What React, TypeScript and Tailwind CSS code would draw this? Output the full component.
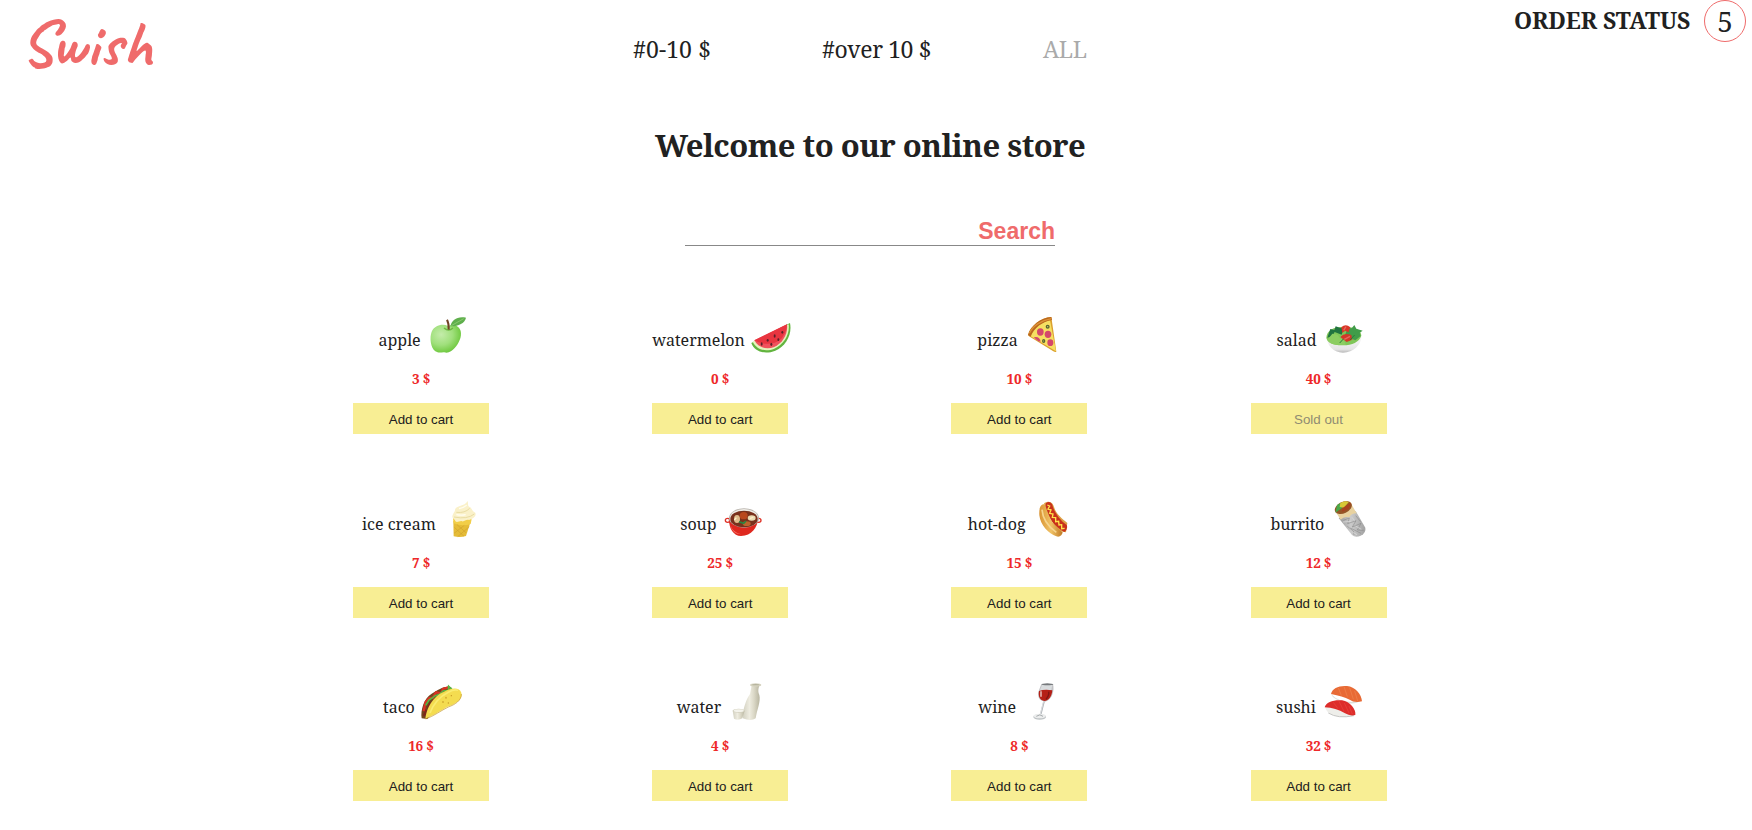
import type { ReactNode } from "react";

type Product = { name: string; price: number; viewBox: string; art: ReactNode; soldOut?: boolean; nameClass: string };

const products: Product[] = [
  {
    name: "apple", price: 3, viewBox: "253 45 132 120", nameClass: "w-[41px]",
    art: (
      <>
        <defs>
          <radialGradient id="apple" cx="0.35" cy="0.35" r="0.75">
            <stop offset="0" stopColor="#c4ecaa" /><stop offset="0.5" stopColor="#a0e07c" /><stop offset="0.85" stopColor="#74cb45" /><stop offset="1" stopColor="#65b83f" />
          </radialGradient>
        </defs>
        <path d="M322 78C305 70 282 76 273 95C266 113 270 143 284 154C295 161 303 156 311 157C322 161 334 154 342 144C355 130 364 110 360 93C354 74 335 72 322 78Z" fill="url(#apple)" />
        <path d="M329 79C334 60 349 48 376 53C372 70 352 80 329 79Z" fill="#5faf4c" />
        <path d="M332 77L369 56" stroke="#9bd57c" strokeWidth="2" />
        <path d="M310 84Q324 96 337 84" stroke="#6eb842" strokeWidth="4" fill="none" />
        <path d="M324 89Q325 70 319 59" stroke="#704224" strokeWidth="6" fill="none" />
      </>
    ),
  },
  {
    name: "watermelon", price: 0, viewBox: "1227 45 132 120", nameClass: "w-[92px]",
    art: (
      <>
        <path d="M1234 129C1243 155 1274 165 1306 152C1339 138 1357 102 1350 69Z" fill="#62b43f" />
        <path d="M1238 125C1250 148 1274 157 1303 146C1331 134 1350 103 1346 73Z" fill="#e5f3bd" />
        <path d="M1243 121C1254 142 1278 151 1303 141C1328 130 1345 101 1341 73Z" fill="#f0525d" />
        <path d="M1243 121L1341 73C1341 84 1337 100 1324 116C1300 139 1262 132 1243 121Z" fill="#e83540" />
        <g fill="#5c2029"><ellipse cx="1265" cy="132" rx="3" ry="5" /><ellipse cx="1283" cy="121" rx="3" ry="4" /><ellipse cx="1294" cy="133" rx="3" ry="5" /><ellipse cx="1304" cy="108" rx="3" ry="5" /><ellipse cx="1315" cy="119" rx="3" ry="4" /><ellipse cx="1327" cy="97" rx="3" ry="4" /></g>
      </>
    ),
  },
  {
    name: "pizza", price: 10, viewBox: "246 45 132 120", nameClass: "w-[40px]",
    art: (
      <>
        <path d="M264 105C272 77 302 53 334 51L349 155Q346 158 340 154L267 109Z" fill="#dba12e" />
        <path d="M271 108C280 84 303 66 330 61L348 154Z" fill="#f6df62" />
        <path d="M264 105C272 77 302 53 334 51L336 60C307 65 282 83 272 110Z" fill="#ba671e" />
        <path d="M268 100C278 78 303 61 334 56" stroke="#dc9238" strokeWidth="4" fill="none" />
        <g fill="#d4476b"><ellipse cx="301" cy="96" rx="10" ry="11" /><ellipse cx="324" cy="103" rx="10" ry="11" /><path d="M281 112Q299 107 302 125L295 124Z" /><ellipse cx="331" cy="128" rx="9" ry="10" /></g>
        <g fill="#c7db66" stroke="#5b6332" strokeWidth="4"><ellipse cx="323" cy="80" rx="4" ry="4" /><ellipse cx="311" cy="123" rx="3" ry="4" /></g>
      </>
    ),
  },
  {
    name: "salad", price: 40, soldOut: true, viewBox: "1144 45 132 120", nameClass: "w-[40px]",
    art: (
      <>
        <defs><linearGradient id="bowl" x2="0" y2="1"><stop stopColor="#fafafa" /><stop offset="0.8" stopColor="#e4e4e4" /><stop offset="1" stopColor="#b9b9b9" /></linearGradient></defs>
        <path d="M1157 111C1160 135 1176 158 1207 158C1238 158 1261 136 1263 108Z" fill="url(#bowl)" />
        <path d="M1157 114C1158 91 1178 80 1210 80C1244 80 1262 91 1262 107C1255 127 1233 137 1203 136C1178 136 1160 127 1157 114Z" fill="#7fc658" />
        <path d="M1160 113L1169 87L1181 90L1185 79L1199 84L1210 83L1203 104L1182 96L1174 109Z" fill="#227440" />
        <path d="M1213 106L1221 84L1233 85L1241 75L1247 86L1266 92L1257 98L1260 108L1244 121L1228 114Z" fill="#419c49" />
        <path d="M1160 120L1175 101L1191 104L1198 115L1209 120L1216 134C1185 138 1165 131 1160 120Z" fill="#8ccd61" />
        <path d="M1202 82Q1215 70 1229 82L1223 97L1214 92L1205 98Z" fill="#d83728" />
        <path d="M1199 111Q1210 97 1232 105L1235 119L1218 126Z" fill="#d23729" />
        <path d="M1209 91L1216 80M1211 118L1228 109" stroke="#e7685e" strokeWidth="4" />
        <path d="M1197 129L1208 117M1228 120L1242 105" stroke="#287e3b" strokeWidth="3" />
      </>
    ),
  },
  {
    name: "ice cream", price: 7, viewBox: "302 54 132 120", nameClass: "w-[74px]",
    art: (
      <>
        <path d="M339 119L391 119L387 134L377 165Q360 170 340 166Z" fill="#e5bc38" />
        <path d="M338 112L393 108Q395 118 391 129Q367 138 340 127Z" fill="#f2ce48" />
        <path d="M342 139L371 166M350 131L377 155M387 137L352 167M372 133L341 157" stroke="#c99a2a" strokeWidth="1.5" />
        <path d="M336 109C336 97 344 94 344 86C347 73 373 77 382 60C385 70 380 75 390 79C397 86 396 92 405 95C409 107 398 113 386 117C376 114 371 125 363 120C354 122 346 126 344 118Z" fill="#faf1c9" />
        <path d="M348 94Q374 97 388 82M341 108Q381 116 402 99" stroke="#e9dca2" strokeWidth="3" fill="none" />
        <path d="M356 83Q369 81 379 73M348 101Q363 104 376 101" stroke="#fffdf0" strokeWidth="4" fill="none" />
      </>
    ),
  },
  {
    name: "soup", price: 25, viewBox: "1143 54 132 120", nameClass: "w-[36px]",
    art: (
      <>
        <ellipse cx="1163" cy="118" rx="7" ry="6" fill="none" stroke="#df3227" strokeWidth="4" />
        <ellipse cx="1256" cy="118" rx="7" ry="6" fill="none" stroke="#df3227" strokeWidth="4" />
        <path d="M1166 111C1167 143 1180 165 1203 165C1235 164 1252 141 1255 111Z" fill="#df281f" />
        <path d="M1171 132Q1180 156 1204 160Q1177 160 1171 132Z" fill="#fa7267" />
        <ellipse cx="1212" cy="111" rx="45" ry="29" fill="#b9b4ad" />
        <ellipse cx="1212" cy="110" rx="42" ry="26" fill="#eeece6" />
        <ellipse cx="1212" cy="114" rx="41" ry="25" fill="#79311d" />
        <ellipse cx="1191" cy="114" rx="9" ry="12" fill="#dfbd8d" /><ellipse cx="1235" cy="111" rx="12" ry="8" fill="#eadbb3" />
        <ellipse cx="1211" cy="104" rx="12" ry="11" fill="#b9481e" /><ellipse cx="1220" cy="128" rx="12" ry="7" fill="#bd642e" />
        <path d="M1183 117L1189 110M1230 113L1240 108" stroke="#fff0ca" strokeWidth="4" /><path d="M1197 122L1211 127L1218 120" stroke="#298541" strokeWidth="5" fill="none" />
      </>
    ),
  },
  {
    name: "hot-dog", price: 15, viewBox: "276 54 132 120", nameClass: "w-[59px]",
    art: (
      <>
        <defs><linearGradient id="bun"><stop stopColor="#d99332" /><stop offset="0.5" stopColor="#f0c266" /><stop offset="1" stopColor="#c07a24" /></linearGradient></defs>
        <path d="M312 67C329 57 338 64 343 80C348 98 366 113 382 126L378 154L349 149Z" fill="#dda044" />
        <path d="M318 66Q331 58 337 71C340 90 359 117 380 132Q385 143 373 153C343 136 323 110 315 79Z" fill="#c9311b" />
        <path d="M315 70C299 67 297 87 298 103C301 132 326 158 349 166C359 170 367 162 368 154C340 137 327 109 315 70Z" fill="url(#bun)" />
        <path d="M306 86Q309 126 349 154" stroke="#f6d58e" strokeWidth="5" fill="none" />
        <path d="M322 72L329 75L324 84L333 87L329 97L339 99L337 109L347 110L347 122L356 121L357 132L365 131L365 143L374 142" stroke="#ffe34a" strokeWidth="4" fill="none" />
      </>
    ),
  },
  {
    name: "burrito", price: 12, viewBox: "1162 54 132 120", nameClass: "w-[52px]",
    art: (
      <>
        <defs><linearGradient id="foil"><stop stopColor="#999" /><stop offset="0.45" stopColor="#cbcbcb" /><stop offset="1" stopColor="#a2a2a2" /></linearGradient></defs>
        <path d="M1194 111L1245 90L1274 140Q1277 155 1260 164Q1244 171 1234 162Z" fill="url(#foil)" />
        <path d="M1182 88Q1188 63 1217 60Q1232 60 1234 73L1248 97Q1231 97 1226 109Q1210 105 1200 116Z" fill="#e8d2a0" />
        <ellipse cx="1208" cy="80" rx="27" ry="17" transform="rotate(-25 1208 80)" fill="#955526" />
        <path d="M1184 95L1189 72L1200 66L1204 81Z" fill="#49a849" /><path d="M1199 66Q1215 56 1224 64L1209 80L1197 78Z" fill="#d7c736" /><path d="M1207 80L1231 65L1224 84L1204 92Z" fill="#a9411f" />
        <path d="M1208 118L1226 111L1221 128L1246 119L1235 138L1261 127L1250 147L1269 148M1220 136L1238 150L1240 162M1245 104L1260 122M1229 141L1261 157" stroke="#808080" strokeWidth="1.5" fill="none" />
        <path d="M1207 123L1230 121M1234 109L1242 119M1245 135L1262 145M1235 153L1249 161" stroke="#dedede" strokeWidth="2" />
      </>
    ),
  },
  {
    name: "taco", price: 16, viewBox: "238 36 132 120", nameClass: "w-[32px]",
    art: (
      <>
        <path d="M243 145C239 121 250 83 273 71C294 57 317 44 333 53L310 83L260 147Z" fill="#72441d" />
        <path d="M249 124L255 96L266 84L277 83L286 67L302 70L307 57L323 52L330 60" stroke="#d93224" strokeWidth="7" fill="none" />
        <path d="M255 106L265 90L277 82L284 77L297 73L307 63L323 61L324 49L334 59" stroke="#55b742" strokeWidth="5" fill="none" />
        <path d="M250 138L258 119M263 115L271 98" stroke="#7c261b" strokeWidth="8" />
        <path d="M254 146C257 116 276 79 310 65C334 53 356 51 362 68C368 88 343 102 324 109C303 119 281 137 254 146Z" fill="#f4dc50" />
        <path d="M255 147C280 138 302 121 323 111C343 104 363 91 362 72" stroke="#c39427" strokeWidth="2" fill="none" />
        <path d="M268 129C278 102 293 82 323 67Q340 57 352 61" stroke="#faec72" strokeWidth="5" fill="none" />
        <g fill="#c69824"><ellipse cx="316" cy="83" rx="2" ry="3" /><ellipse cx="332" cy="77" rx="2" ry="2" /><ellipse cx="307" cy="96" rx="2" ry="3" /><ellipse cx="323" cy="99" rx="2" ry="2" /></g>
      </>
    ),
  },
  {
    name: "water", price: 4, viewBox: "1154 36 132 120", nameClass: "w-[43px]",
    art: (
      <>
        <defs><linearGradient id="bottle"><stop stopColor="#d2d0c0" /><stop offset="0.4" stopColor="#eeece0" /><stop offset="0.65" stopColor="#dcd9c8" /><stop offset="1" stopColor="#b8b5a0" /></linearGradient></defs>
        <path d="M1234 46L1257 46C1253 60 1253 66 1257 75C1262 94 1249 122 1246 145Q1232 155 1207 145C1207 115 1219 86 1229 72Z" fill="url(#bottle)" />
        <ellipse cx="1246" cy="45" rx="17" ry="5" fill="#d5d2bf" /><ellipse cx="1246" cy="44" rx="11" ry="2" fill="#b6b39d" />
        <path d="M1177 122L1213 122L1206 145Q1193 153 1181 146Z" fill="url(#bottle)" />
        <ellipse cx="1195" cy="122" rx="18" ry="6" fill="#d3d0bf" /><ellipse cx="1195" cy="122" rx="15" ry="4" fill="#f4f3eb" />
      </>
    ),
  },
  {
    name: "wine", price: 8, viewBox: "244 36 132 120", nameClass: "w-[38px]",
    art: (
      <>
        <path d="M304 44L340 42C345 61 338 90 316 95C296 92 293 78 297 63Z" fill="#c2c2c5" />
        <path d="M307 45L338 44L335 60L300 63Z" fill="#d9dcde" />
        <ellipse cx="323" cy="43" rx="18" ry="3" fill="#777a7d" />
        <path d="M298 63Q314 57 338 61C336 82 327 92 314 93C301 91 295 80 298 63Z" fill="#b51f16" />
        <path d="M327 65Q329 76 319 88" stroke="#801613" strokeWidth="4" fill="none" /><path d="M304 64L304 80" stroke="#ead4d1" strokeWidth="4" />
        <path d="M313 94L303 133" stroke="#a8adb2" strokeWidth="5" /><path d="M312 94L302 133" stroke="#f1f3f4" strokeWidth="2" />
        <ellipse cx="300" cy="141" rx="19" ry="8" fill="#bfc3c5" /><ellipse cx="300" cy="138" rx="18" ry="7" fill="#eceded" /><path d="M290 139Q301 130 310 139" stroke="#a5aaac" strokeWidth="3" fill="none" />
      </>
    ),
  },
  {
    name: "sushi", price: 32, viewBox: "1146 36 132 120", nameClass: "w-[41px]",
    art: (
      <>
        <path d="M1173 72Q1195 96 1238 96L1262 91Q1249 103 1224 100Q1180 91 1173 72Z" fill="#deded9" />
        <path d="M1173 72C1177 54 1197 46 1221 48C1245 50 1265 73 1266 94Q1242 99 1229 89Q1208 79 1173 72Z" fill="#e86a35" />
        <path d="M1195 54L1204 76M1212 50L1222 80M1229 53L1240 88M1244 63L1253 93" stroke="#ee8550" strokeWidth="2" fill="none" />
        <path d="M1155 109Q1160 140 1212 141Q1238 142 1247 132Z" fill="#eeeeea" />
        <path d="M1165 129Q1193 147 1242 137" stroke="#c6c6c4" strokeWidth="3" fill="none" />
        <path d="M1154 112C1158 95 1182 89 1206 91C1230 94 1249 119 1246 135Q1230 139 1215 130Q1187 113 1154 112Z" fill="#dd2d2b" />
        <path d="M1180 97L1194 116M1197 94L1212 124M1213 99L1227 129M1227 108L1237 132" stroke="#e84640" strokeWidth="2" />
      </>
    ),
  },
];

function ProductCard({ product }: { product: Product }) {
  return (
    <article className="flex w-[136px] flex-col items-center">
      <div className="flex h-10 w-full items-start justify-center">
        <h2 className={`shrink-0 pt-[13px] text-[16px] leading-6 whitespace-nowrap ${product.nameClass} ${product.name === "burrito" ? "tracking-[-0.2px]" : "tracking-normal"}`}>{product.name}</h2>
        <svg className="-mr-[5px] ml-[5px] h-10 w-11 shrink-0" viewBox={product.viewBox} fill="none" aria-hidden="true">{product.art}</svg>
      </div>
      <p className="mt-[15px] h-[19px] text-[13.5px] leading-[19px] font-bold tracking-[-0.2px] text-[#ee2929]">{product.price} $</p>
      <button
        disabled={product.soldOut}
        className="mt-[14px] h-[31px] w-full bg-[#f8ee94] pt-[2px] font-['Liberation_Sans',sans-serif] text-[13.33px] leading-[29px] text-[#202020] disabled:text-[#8f8b72]"
      >
        {product.soldOut ? "Sold out" : "Add to cart"}
      </button>
    </article>
  );
}

export default function App() {
  return (
    <div className="h-[830px] w-full overflow-hidden bg-white font-['Roboto_Slab','Noto_Serif',serif] text-[#212121]">
      <header className="flex h-[100px] items-start">
        <div className="w-[633px] pt-[4px] pl-5 font-['Caveat',cursive] text-[66px] leading-[80px] font-semibold text-[#ef6b6b]">Swish</div>
        <nav className="flex h-[98px] w-[881px] items-center text-[23px] whitespace-nowrap">
          <a className="w-[189px] tracking-[0.1px]">#0-10 $</a>
          <a className="w-[221px] tracking-[-0.4px]">#over 10 $</a>
          <a className="tracking-[-0.4px] text-[#aaa]">ALL</a>
        </nav>
        <div className="flex items-center whitespace-nowrap">
          <span className="w-[190px] pb-[2px] text-[23px] font-bold tracking-[-0.1px]">ORDER STATUS</span>
          <span className="flex size-[42px] items-center justify-center rounded-full border border-[#ef6b6b] text-[28px] leading-none">5</span>
        </div>
      </header>
      <main>
        <h1 className="ml-[655px] h-[92px] pt-[21px] text-[31px] leading-[48px] font-bold tracking-[-0.5px] whitespace-nowrap">Welcome to our online store</h1>
        <form className="ml-[685px] flex h-[54px] w-[370px] items-end justify-end border-b border-[#888]">
          <button type="button" className="font-['Liberation_Sans',sans-serif] text-[23px] leading-[27px] font-bold text-[#ef6b6b]">Search</button>
        </form>
        <section className="mt-[69px] ml-[353px] grid w-[1033.5px] grid-cols-4 gap-x-[163.2px] gap-y-[64.5px]">
          {products.map((p) => <ProductCard key={p.name} product={p} />)}
        </section>
      </main>
    </div>
  );
}
